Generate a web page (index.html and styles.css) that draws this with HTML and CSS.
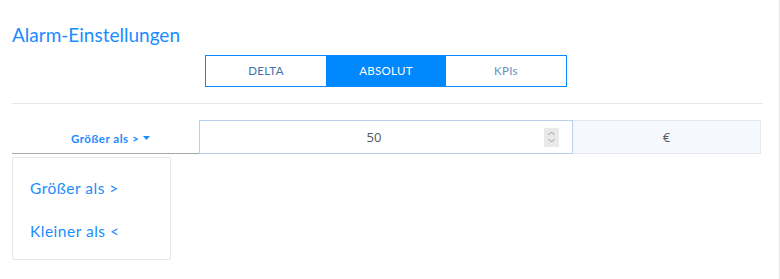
FILE: index.html
```html
<!DOCTYPE html>
<html lang="de">
<head>
<meta charset="utf-8">
<title>Alarm-Einstellungen</title>
<link rel="stylesheet" href="styles.css">
</head>
<body>
<div class="frame">
  <div class="page">
    <h2 class="title">Alarm-Einstellungen</h2>
    <div class="tabs-wrap">
      <div class="tabs">
        <div class="tab">DELTA</div>
        <div class="tab active">ABSOLUT</div>
        <div class="tab light">KPIs</div>
      </div>
    </div>
    <div class="divider"></div>
    <div class="row">
      <div class="select">
        <span class="select-label">Größer als &gt;</span>
        <svg class="caret" width="7" height="4" viewBox="0 0 7 4"><path d="M0 0H7L3.5 4Z" fill="#1a8cff"/></svg>
        <div class="menu">
          <div class="menu-item">Größer als &gt;</div>
          <div class="menu-item">Kleiner als &lt;</div>
        </div>
      </div>
      <div class="input">
        <span class="value">50</span>
        <span class="spinner">
          <svg width="9" height="14" viewBox="0 0 9 14"><path d="M1.5 5L4.5 2L7.5 5M1.5 9L4.5 12L7.5 9" fill="none" stroke="#9a9a9a" stroke-width="1"/></svg>
        </span>
      </div>
      <div class="addon">€</div>
    </div>
  </div>
</div>
</body>
</html>
```
FILE: styles.css
```css
html, body {
  margin: 0;
  padding: 0;
  background: #fff;
}
.frame {
  width: 779px;
  min-height: 279px;
  border-right: 1px solid #e6e6e6;
}
.page {
  padding: 0 16px 0 12px;
  font-family: Lato, "Open Sans", sans-serif;
}
.title {
  margin: 0;
  padding-top: 24px;
  font-size: 19px;
  line-height: 22px;
  font-weight: 400;
  color: #1a8cff;
}
.tabs-wrap {
  display: flex;
  justify-content: center;
  margin-top: 9px;
  padding-right: 3px;
}
.tabs {
  display: flex;
  border: 1px solid #0a88ff;
}
.tab {
  width: 120px;
  height: 30px;
  display: flex;
  align-items: center;
  justify-content: center;
  font-size: 11.5px;
  color: #3f72aa;
  letter-spacing: 0.3px;
  padding-bottom: 2px;
  box-sizing: border-box;
}
.tab.active {
  background: #0088ff;
  color: #fff;
}
.tab.light {
  color: #6d8db4;
}
.divider {
  height: 1px;
  background: #e6e6e6;
  margin-top: 16px;
}
.row {
  display: flex;
  margin-top: 16px;
  width: 749px;
}
.select {
  position: relative;
  width: 187px;
  height: 34px;
  box-sizing: border-box;
  border-bottom: 1px solid #a8a8a8;
  display: flex;
  align-items: center;
  justify-content: center;
  gap: 4px;
  padding-left: 10px;
  padding-top: 4px;
}
.select-label {
  font-size: 11.5px;
  font-weight: 700;
  color: #1a8cff;
  letter-spacing: 0.5px;
}
.caret {
  margin-top: -1px;
}
.menu {
  position: absolute;
  left: 0;
  top: 37px;
  width: 159px;
  height: 103px;
  box-sizing: border-box;
  border: 1px solid #e8e8e8;
  border-radius: 2px;
  background: #fff;
  padding: 20px 0 0 17px;
}
.menu-item {
  font-size: 15.5px;
  line-height: 20px;
  color: #1a8cff;
  letter-spacing: 0.5px;
  margin-bottom: 23px;
}
.input {
  width: 374px;
  height: 34px;
  box-sizing: border-box;
  border: 1px solid #b9d1ea;
  display: flex;
  align-items: center;
  position: relative;
}
.value {
  flex: 1;
  text-align: center;
  font-family: "Open Sans", sans-serif;
  font-size: 13px;
  color: #555;
  padding-left: 4px;
}
.spinner {
  width: 15px;
  height: 19px;
  background: #e9e9e9;
  display: flex;
  align-items: center;
  justify-content: center;
  margin-right: 13px;
}
.addon {
  width: 188px;
  height: 34px;
  box-sizing: border-box;
  border: 1px solid #e3e8ef;
  border-left: none;
  background: #f5f8fd;
  display: flex;
  align-items: center;
  justify-content: center;
  font-family: "Open Sans", sans-serif;
  font-size: 13px;
  color: #555b66;
}
```
